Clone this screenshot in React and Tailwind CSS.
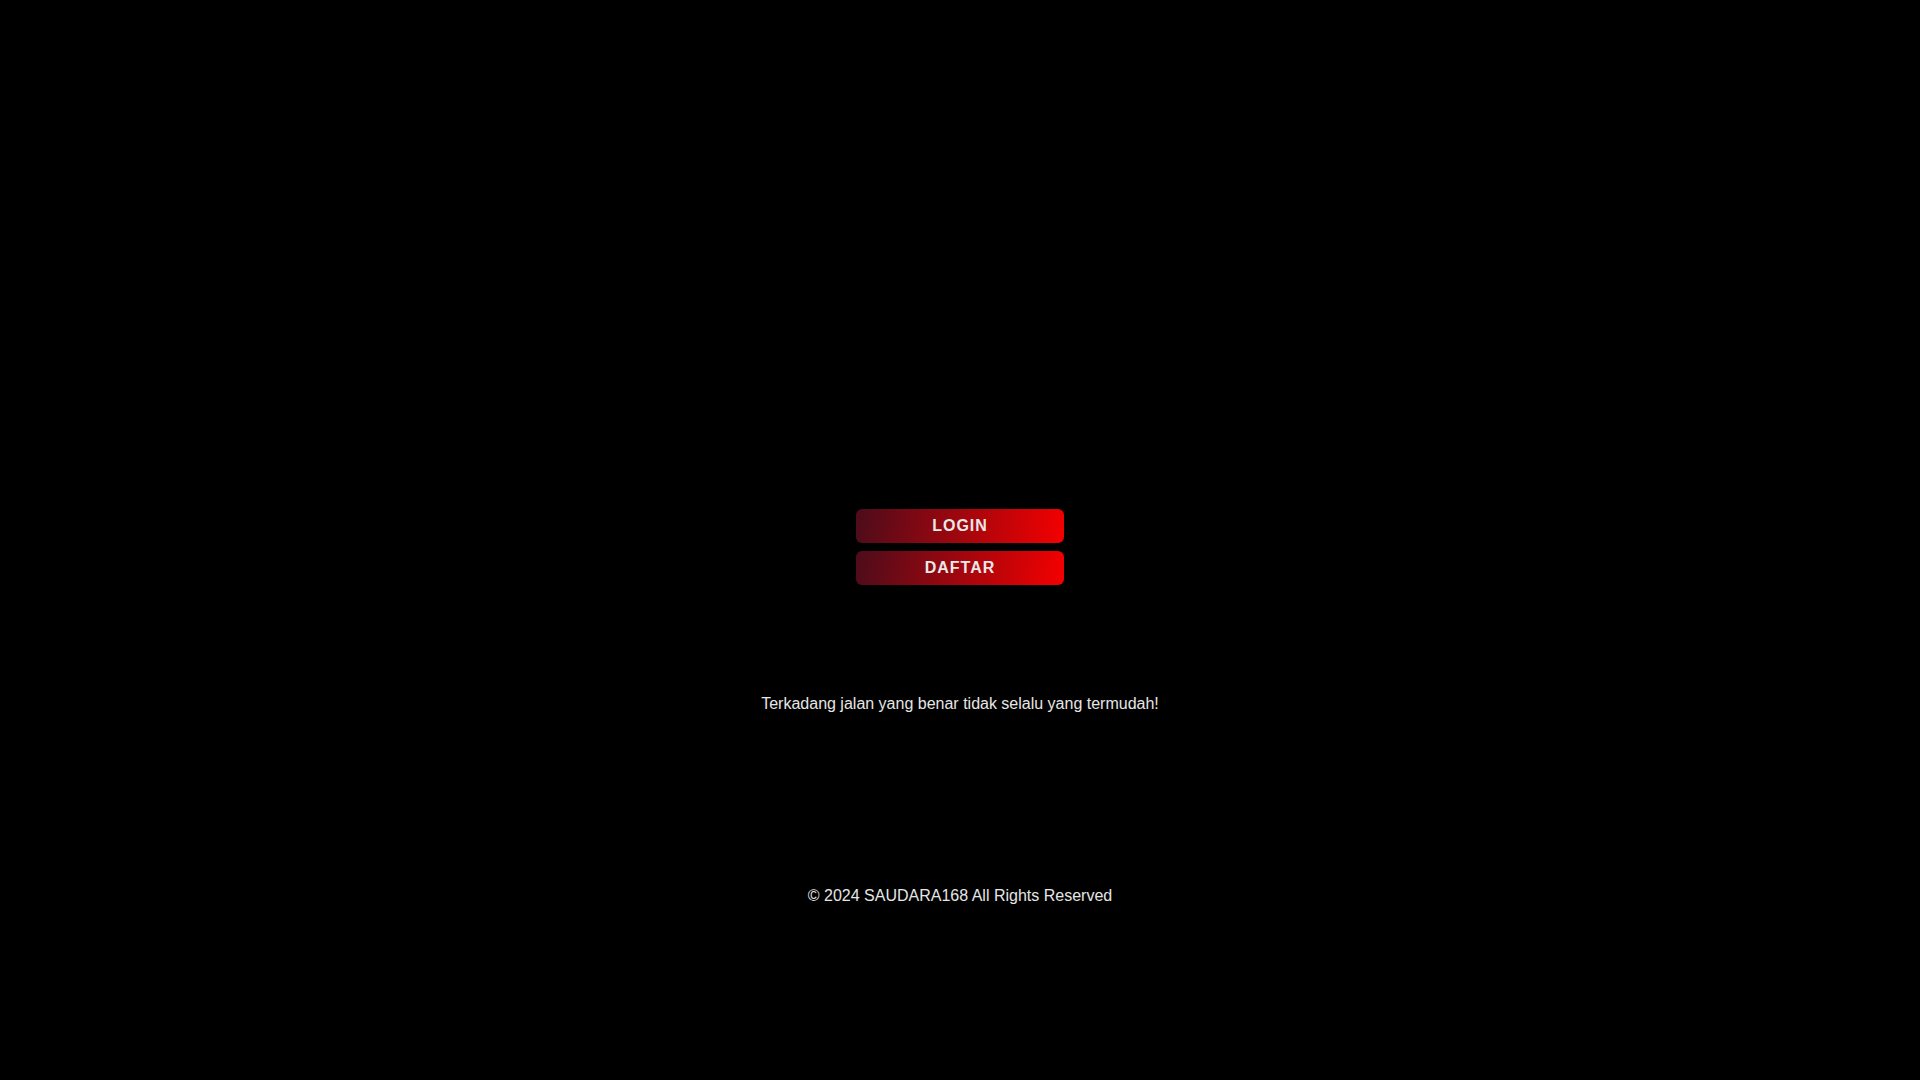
import React from "react";

const App = () => {
  return (
    <div className="min-h-screen w-full bg-black font-['Liberation_Sans',Arial,sans-serif] text-[#e6e6e6]">
      <div className="flex flex-col items-center pt-[509px] pb-[172px]">
        {/* Buttons */}
        <div className="flex flex-col gap-2 w-[208px]">
          <a
            href="#"
            className="flex h-[34px] items-center justify-center rounded-md bg-[linear-gradient(100deg,#4c0c1b,#f50000)] text-[16px] font-bold tracking-[1px] text-[#e8e8e8]"
          >
            LOGIN
          </a>
          <a
            href="#"
            className="flex h-[34px] items-center justify-center rounded-md bg-[linear-gradient(100deg,#4c0c1b,#f50000)] text-[16px] font-bold tracking-[1px] text-[#e8e8e8]"
          >
            DAFTAR
          </a>
        </div>

        <p className="mt-[107px] text-[16px] leading-6">
          Terkadang jalan yang benar tidak selalu yang termudah!
        </p>

        <footer className="mt-[168px] text-[16px] leading-6">
          © 2024 SAUDARA168 All Rights Reserved
        </footer>
      </div>
    </div>
  );
};

export default App;
